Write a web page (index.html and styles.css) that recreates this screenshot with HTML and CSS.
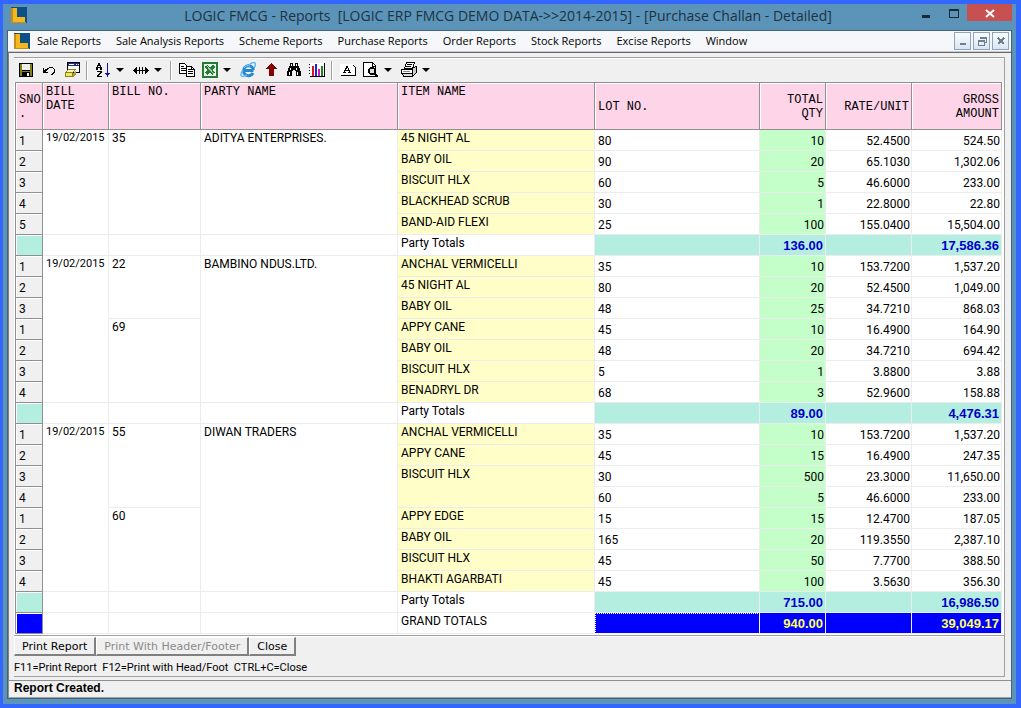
FILE: index.html
```html
<!DOCTYPE html>
<html lang="en">
<head>
    <meta charset="UTF-8">
    <meta name="viewport" content="width=device-width, initial-scale=1.0">
    <title>LOGIC FMCG - Reports</title>
    <link rel="stylesheet" href="styles.css">
</head>
<body>
    <div class="window">
        <header class="title-bar">
            <svg class="logo" viewBox="0 0 16 16"><rect width="16" height="16" fill="#0d5086"/><path d="M1 1h5v9h8v5H1z" fill="#f5b81c"/><path d="M1 1h1v14h13v1H0V1z" fill="#c98c14"/></svg>
            <h1>LOGIC FMCG - Reports&nbsp; [LOGIC ERP FMCG DEMO DATA-&gt;&gt;2014-2015] - [Purchase Challan - Detailed]</h1>
            <div class="window-buttons">
                <button class="win-btn" aria-label="Minimize"><svg viewBox="0 0 12 12"><path d="M1 8h8v3H1z" fill="#1b2b36"/></svg></button>
                <button class="win-btn" aria-label="Maximize"><svg viewBox="0 0 12 12"><path d="M1 2h10v9H1zM2 4v6h8V4z" fill="#1b2b36" fill-rule="evenodd"/></svg></button>
                <button class="win-btn win-close" aria-label="Close window"><svg viewBox="0 0 12 12"><path d="M2 3l8 7M10 3l-8 7" stroke="#fff" stroke-width="2"/></svg></button>
            </div>
        </header>

        <div class="client">
            <nav class="menu-bar">
                <svg class="logo" viewBox="0 0 16 16"><rect width="16" height="16" fill="#0d5086"/><path d="M1 1h5v9h8v5H1z" fill="#f5b81c"/><path d="M1 1h1v14h13v1H0V1z" fill="#c98c14"/></svg>
                <a href="#">Sale Reports</a>
                <a href="#">Sale Analysis Reports</a>
                <a href="#">Scheme Reports</a>
                <a href="#">Purchase Reports</a>
                <a href="#">Order Reports</a>
                <a href="#">Stock Reports</a>
                <a href="#">Excise Reports</a>
                <a href="#">Window</a>
                <div class="mdi-buttons">
                    <button aria-label="Minimize report"><svg viewBox="0 0 10 10"><path d="M2 7h6v2H2z" fill="#6d7f92"/></svg></button>
                    <button aria-label="Restore report"><svg viewBox="0 0 10 10"><path d="M3 3V1h6v5H7M1 4h6v5H1zM1 5h6M3 2h6" stroke="#6d7f92" fill="none"/></svg></button>
                    <button aria-label="Close report"><svg viewBox="0 0 10 10"><path d="M2 2l6 6M8 2L2 8" stroke="#6d7f92" stroke-width="2"/></svg></button>
                </div>
            </nav>

            <main class="report">
                <div class="panel">
                    <div class="toolbar">
                        <button class="tool" aria-label="Save"><svg viewBox="0 0 16 16"><path d="M1 1h14v14H1z"/><path d="M2 2h2v12H2zM12 2h2v12h-2zM2 9h12v1H2z" fill="#808020"/><path d="M4 2h8v6H4z" fill="#eee"/><path d="M9 11h2v3H9z" fill="#eee"/></svg></button>
                        <button class="tool" aria-label="Undo"><svg viewBox="0 0 16 16"><path d="M2 6h1v2h1V7h2V6h2V5h4v1h1v1h1v4h-1v1h-1v1h-2v-1h1v-1h1v-1h1V7h-1V6H8v1H7v1H6v1H5v1h2v1H2z"/></svg></button>
                        <button class="tool" aria-label="Clear"><svg viewBox="0 0 16 16"><path d="M3 0h13v11H3z" fill="#000"/><path d="M4 1h11v3H4z" fill="#22298f"/><path d="M4 4h11v6H4z" fill="#f8f8f8"/><path d="M5 2h5v1H5zM12 2h1v1h-1zM14 2h1v1h-1z" fill="#fff"/><path d="M4.500 7.500h7l-3 3h-7z" fill="#fffbc0" stroke="#8a8220"/><path d="M1.500 10.500h7v4h-7z" fill="#f2e860" stroke="#8a8220"/><path d="M9 11l3-3v4l-3 3z" fill="#aaa02c"/></svg></button>
                        <span class="sep"></span>
                        <button class="tool" aria-label="Sort"><svg viewBox="0 0 16 16"><path d="M3 1h2v2h1v2h1v3H5V6H3v2H1V5h1V3h1zM3 4v1h2V4zM2 9h5v2H6v1H5v1H4v1h3v1H2v-2h1v-1h1v-1h1v-1H2z"/><path d="M12 1h1v10h2v1h-1v1h-1v2h-1v-2h-1v-1h-1v-1h2z" fill="#10109a"/></svg></button>
                        <button class="caret" aria-label="Sort options"></button>
                        <button class="tool" aria-label="Fit column width"><svg viewBox="0 0 16 16"><path d="M0 8h1V7h1V6h1V5h1v3h2V5h1v3h2V5h1v3h2V5h1v1h1v1h1v1h1v1h-1v1h-1v1h-1v1h-1V9h-2v3H9V9H7v3H6V9H4v3H3v-1H2v-1H1V9H0z"/></svg></button>
                        <button class="caret" aria-label="Width options"></button>
                        <span class="sep"></span>
                        <button class="tool" aria-label="Copy"><svg viewBox="0 0 16 16"><path d="M.5 1.500h5l2 2v8h-7zM7.500 4.500h5l3 3v7h-8z" fill="#fff" stroke="#000"/><path d="M2 4h3v1H2zM2 6h5v1H2zM2 8h5v1H2zM9 7h3v1H9zM9 9h5v1H9zM9 11h5v1H9zM12 5h1v2h2v1h-3z"/></svg></button>
                        <button class="tool" aria-label="Export to Excel"><svg viewBox="0 0 16 16"><path d="M1 1h14v14H1z" fill="#e8f4e8" stroke="#267a36" stroke-width="2"/><path d="M4 4l8 8M12 4l-8 8" stroke="#267a36" stroke-width="3"/><path d="M4 3l8 9" stroke="#a9d5ac"/></svg></button>
                        <button class="caret" aria-label="Export options"></button>
                        <button class="tool" aria-label="Internet"><svg class="smooth" viewBox="0 0 16 16"><path d="M13.500 8.500H4M13 11a5 5 0 1 1 .5-3" fill="none" stroke="#2487cf" stroke-width="3"/><path d="M10 2c5-3 7-1 4 4M3 8c-4 6-2 8 4 5" fill="none" stroke="#5cb7ec" stroke-width="1.500"/><path d="M4 6c1-2 4-3 6-2" fill="none" stroke="#8fd3f8"/></svg></button>
                        <button class="tool" aria-label="Move up"><svg viewBox="0 0 16 16"><path d="M8 1h1v1h1v1h1v1h1v1h1v1h1v1h-3v7H6V7H3V6h1V5h1V4h1V3h1V2h1z" fill="#850000"/></svg></button>
                        <button class="tool" aria-label="Find"><svg viewBox="0 0 16 16"><path d="M4 1h3v3h2V1h3v3h1v2h1v3h1v5h-5V9H9V8H7v1H6v5H1V9h1V6h1V4h1z"/><path d="M5 2h1v2H5zM10 2h1v2h-1zM4 6h1v2H4zM10 6h1v2h-1zM3 10h1v3H3zM11 10h1v3h-1z" fill="#fff"/></svg></button>
                        <button class="tool" aria-label="Chart"><svg viewBox="0 0 16 16"><path d="M1 1h14v13H1z" fill="#fff"/><path d="M0 2h1v1H0zM0 5h1v1H0zM0 8h1v1H0zM0 11h1v1H0zM1 14h15v1H1zM15 1h1v14h-1z"/><path d="M3 4h2v10H3z" fill="#d01818"/><path d="M6 2h2v12H6z" fill="#2222d8"/><path d="M9 7h2v7H9z" fill="#c020c0"/><path d="M12 4h2v10h-2z" fill="#188818"/></svg></button>
                        <span class="sep"></span>
                        <button class="tool" aria-label="Font"><svg viewBox="0 0 16 16"><path d="M0 2h13l3 3v8H0z" fill="#fff"/><path d="M1 13h15v1H1zM15 5h1v9h-1zM13 3h1v1h-1zM14 4h1v1h-1zM6 4h2v2h1v2h1v2h1v1H8v-1h1V9H5v1h1v1H3v-1h1V8h1V6h1zM6 7v1h2V6H7v1z"/></svg></button>
                        <button class="tool" aria-label="Print preview"><svg viewBox="0 0 16 16"><path d="M.5.5h9l3 3v11H.5z" fill="#fff" stroke="#000"/><path d="M9 1h1v3h3v1H9z"/><circle cx="9" cy="9" r="3" fill="#ddd" stroke="#000" stroke-width="1.500"/><path d="M11 11l4 4" stroke="#000" stroke-width="2"/></svg></button>
                        <button class="caret" aria-label="Preview options"></button>
                        <button class="tool" aria-label="Print"><svg viewBox="0 0 16 16"><path d="M5.500.5h8l-2 6h-8z" fill="#fff" stroke="#000"/><path d="M6 2h5v1H6zM5 4h5v1H5z"/><path d="M11.500 6.500l3-2h1v6l-4 4z" fill="#ccc" stroke="#000"/><path d="M.5 7.500h11v4H.5z" fill="#fff" stroke="#000"/><path d="M2 9h7v1H2z" fill="#888"/><path d="M1.500 11.500h10v3h-9z" stroke="#000" fill="#ddd"/></svg></button>
                        <button class="caret" aria-label="Print options"></button>
                    </div>

                    <div class="grid-wrap">
                        <table class="grid">
                            <colgroup>
                                <col class="c-sno"><col class="c-date"><col class="c-bill"><col><col><col class="c-lot"><col class="c-qty"><col class="c-rate"><col class="c-amount">
                            </colgroup>
                            <thead>
                                <tr>
                                    <th>SNO<br>.</th>
                                    <th class="top">BILL<br>DATE</th>
                                    <th class="top">BILL NO.</th>
                                    <th class="top">PARTY NAME</th>
                                    <th class="top">ITEM NAME</th>
                                    <th>LOT NO.</th>
                                    <th class="num">TOTAL<br>QTY</th>
                                    <th class="num">RATE/UNIT</th>
                                    <th class="num">GROSS<br>AMOUNT</th>
                                </tr>
                            </thead>
                            <tbody>
                                <tr><td class="sno">1</td><td class="top date" rowspan="5">19/02/2015</td><td class="top" rowspan="5">35</td><td class="top" rowspan="5">ADITYA ENTERPRISES.</td><td class="item">45 NIGHT AL</td><td>80</td><td class="qty">10</td><td class="num">52.4500</td><td class="num">524.50</td></tr>
                                <tr><td class="sno">2</td><td class="item">BABY OIL</td><td>90</td><td class="qty">20</td><td class="num">65.1030</td><td class="num">1,302.06</td></tr>
                                <tr><td class="sno">3</td><td class="item">BISCUIT HLX</td><td>60</td><td class="qty">5</td><td class="num">46.6000</td><td class="num">233.00</td></tr>
                                <tr><td class="sno">4</td><td class="item">BLACKHEAD SCRUB</td><td>30</td><td class="qty">1</td><td class="num">22.8000</td><td class="num">22.80</td></tr>
                                <tr><td class="sno">5</td><td class="item">BAND-AID FLEXI</td><td>25</td><td class="qty">100</td><td class="num">155.0400</td><td class="num">15,504.00</td></tr>
                                <tr class="total"><td class="sno"></td><td></td><td></td><td></td><td class="top">Party Totals</td><td class="sum"></td><td class="sum">136.00</td><td class="sum"></td><td class="sum">17,586.36</td></tr>
                            </tbody>
                            <tbody>
                                <tr><td class="sno">1</td><td class="top date" rowspan="7">19/02/2015</td><td class="top" rowspan="3">22</td><td class="top" rowspan="7">BAMBINO NDUS.LTD.</td><td class="item">ANCHAL VERMICELLI</td><td>35</td><td class="qty">10</td><td class="num">153.7200</td><td class="num">1,537.20</td></tr>
                                <tr><td class="sno">2</td><td class="item">45 NIGHT AL</td><td>80</td><td class="qty">20</td><td class="num">52.4500</td><td class="num">1,049.00</td></tr>
                                <tr><td class="sno">3</td><td class="item">BABY OIL</td><td>48</td><td class="qty">25</td><td class="num">34.7210</td><td class="num">868.03</td></tr>
                                <tr><td class="sno">1</td><td class="top" rowspan="4">69</td><td class="item">APPY CANE</td><td>45</td><td class="qty">10</td><td class="num">16.4900</td><td class="num">164.90</td></tr>
                                <tr><td class="sno">2</td><td class="item">BABY OIL</td><td>48</td><td class="qty">20</td><td class="num">34.7210</td><td class="num">694.42</td></tr>
                                <tr><td class="sno">3</td><td class="item">BISCUIT HLX</td><td>5</td><td class="qty">1</td><td class="num">3.8800</td><td class="num">3.88</td></tr>
                                <tr><td class="sno">4</td><td class="item">BENADRYL DR</td><td>68</td><td class="qty">3</td><td class="num">52.9600</td><td class="num">158.88</td></tr>
                                <tr class="total"><td class="sno"></td><td></td><td></td><td></td><td class="top">Party Totals</td><td class="sum"></td><td class="sum">89.00</td><td class="sum"></td><td class="sum">4,476.31</td></tr>
                            </tbody>
                            <tbody>
                                <tr><td class="sno">1</td><td class="top date" rowspan="8">19/02/2015</td><td class="top" rowspan="4">55</td><td class="top" rowspan="8">DIWAN TRADERS</td><td class="item">ANCHAL VERMICELLI</td><td>35</td><td class="qty">10</td><td class="num">153.7200</td><td class="num">1,537.20</td></tr>
                                <tr><td class="sno">2</td><td class="item">APPY CANE</td><td>45</td><td class="qty">15</td><td class="num">16.4900</td><td class="num">247.35</td></tr>
                                <tr><td class="sno">3</td><td class="item" rowspan="2">BISCUIT HLX</td><td>30</td><td class="qty">500</td><td class="num">23.3000</td><td class="num">11,650.00</td></tr>
                                <tr><td class="sno">4</td><td>60</td><td class="qty">5</td><td class="num">46.6000</td><td class="num">233.00</td></tr>
                                <tr><td class="sno">1</td><td class="top" rowspan="4">60</td><td class="item">APPY EDGE</td><td>15</td><td class="qty">15</td><td class="num">12.4700</td><td class="num">187.05</td></tr>
                                <tr><td class="sno">2</td><td class="item">BABY OIL</td><td>165</td><td class="qty">20</td><td class="num">119.3550</td><td class="num">2,387.10</td></tr>
                                <tr><td class="sno">3</td><td class="item">BISCUIT HLX</td><td>45</td><td class="qty">50</td><td class="num">7.7700</td><td class="num">388.50</td></tr>
                                <tr><td class="sno">4</td><td class="item">BHAKTI AGARBATI</td><td>45</td><td class="qty">100</td><td class="num">3.5630</td><td class="num">356.30</td></tr>
                                <tr class="total"><td class="sno"></td><td></td><td></td><td></td><td class="top">Party Totals</td><td class="sum"></td><td class="sum">715.00</td><td class="sum"></td><td class="sum">16,986.50</td></tr>
                            </tbody>
                            <tfoot>
                                <tr class="grand"><td class="sno"></td><td></td><td></td><td></td><td class="top">GRAND TOTALS</td><td class="sum focused"></td><td class="sum">940.00</td><td class="sum"></td><td class="sum">39,049.17</td></tr>
                            </tfoot>
                        </table>
                    </div>

                    <div class="actions">
                        <button>Print Report</button>
                        <button disabled>Print With Header/Footer</button>
                        <button>Close</button>
                    </div>
                    <p class="hint">F11=Print Report&nbsp; F12=Print with Head/Foot&nbsp; CTRL+C=Close</p>
                </div>
            </main>

            <footer class="status">Report Created.</footer>
        </div>
    </div>
</body>
</html>
```
FILE: styles.css
```css
* {
    box-sizing: border-box;
}

body {
    margin: 0;
    background: #3366ff;
    font-family: Roboto, "Liberation Sans", sans-serif;
    font-size: 12px;
    color: #000;
}

button {
    margin: 0;
    padding: 0;
    border: none;
    background: none;
    font: inherit;
}

svg {
    display: block;
    shape-rendering: crispEdges;
}

svg.smooth {
    shape-rendering: auto;
}

.window {
    min-height: 100vh;
    display: flex;
    flex-direction: column;
    padding: 0 4px 5px;
    border: 4px solid #3366ff;
    border-width: 4px 5px 4px 3px;
    background: #5b93b9;
}

.logo {
    width: 16px;
    height: 16px;
    flex: none;
}

/* Title bar */
.title-bar {
    display: flex;
    align-items: flex-start;
    height: 26px;
    padding: 3px 0 0 4px;
}

.title-bar h1 {
    flex: 1;
    margin: 0;
    padding-left: 76px;
    text-align: center;
    font: 14px/18px "Open Sans", "Noto Sans", sans-serif;
    color: #1d323f;
    white-space: nowrap;
}

.window-buttons {
    display: flex;
    margin-top: -3px;
}

.win-btn {
    width: 27px;
    height: 17px;
    display: flex;
    align-items: center;
    justify-content: center;
}

.win-btn svg {
    width: 12px;
    height: 12px;
}

.win-close {
    width: 45px;
    background: #c75050;
}

.win-close svg {
    shape-rendering: auto;
}

/* Client area */
.client {
    flex: 1;
    display: flex;
    flex-direction: column;
    border: 1px solid #41637c;
    background: #f0f0f0;
}

.menu-bar {
    display: flex;
    align-items: center;
    gap: 15px;
    height: 21px;
    padding: 0 2px 0 6px;
    background: #f5f7fa;
    border-bottom: 1px solid #c8ccd0;
}

.menu-bar .logo {
    margin-right: -8px;
}

.menu-bar a {
    font: 11px/18px "Open Sans", "Noto Sans", sans-serif;
    color: #000;
    text-decoration: none;
    white-space: nowrap;
}

.mdi-buttons {
    display: flex;
    gap: 2px;
    margin-left: auto;
}

.mdi-buttons button {
    width: 17px;
    height: 18px;
    display: flex;
    align-items: center;
    justify-content: center;
    border: 1px solid #8fa4ba;
    background: linear-gradient(#fafcfe, #d9e5f2);
}

.mdi-buttons svg {
    width: 10px;
    height: 10px;
}

.report {
    flex: 1;
    padding: 4px 6px 3px 5px;
    border-top: 1px solid #696969;
    border-left: 1px solid #808080;
}

.panel {
    border-top: 1px solid #a0a0a0;
    border-right: 1px solid #a0a0a0;
    border-bottom: 1px solid #a0a0a0;
}

.toolbar {
    display: flex;
    align-items: center;
    height: 24px;
    padding-bottom: 1px;
    border-top: 1px solid #fff;
}

.tool {
    width: 23px;
    height: 22px;
    display: flex;
    align-items: center;
    justify-content: center;
}

.tool svg {
    width: 16px;
    height: 16px;
}

.caret {
    width: 15px;
    height: 22px;
    display: flex;
    align-items: center;
}

.caret::before {
    content: "";
    margin-left: 2px;
    border: 4px solid transparent;
    border-top-color: #000;
    border-bottom: none;
}

.sep {
    width: 8px;
    height: 19px;
    background: linear-gradient(90deg, #a0a0a0 50%, #fff 50%) center / 2px 100% no-repeat;
}

/* Report grid */
.grid-wrap {
    padding: 0 2px 1px 1px;
    background: #fff;
    border-bottom: 1px solid #a0a0a0;
}

.grid {
    width: 100%;
    table-layout: fixed;
    border-collapse: separate;
    border-spacing: 0;
    border-top: 1px solid #909090;
    border-left: 1px solid #909090;
}

.c-sno { width: 27px; }
.c-date { width: 66px; }
.c-bill { width: 92px; }
.c-lot { width: 165px; }
.c-qty { width: 66px; }
.c-rate { width: 86px; }
.c-amount { width: 90px; }

.grid th {
    height: 47px;
    padding: 2px 2px 0 3px;
    border-right: 1px solid #909090;
    border-bottom: 1px solid #909090;
    background: #fed4e8;
    box-shadow: inset 1px 1px #fff;
    font: 12px/14px "Liberation Mono", monospace;
    text-align: left;
}

.grid td {
    height: 21px;
    padding: 2px 1px 0 3px;
    border-right: 1px solid #ececec;
    border-bottom: 1px solid #ececec;
    line-height: 14px;
    white-space: nowrap;
}

.grid th.top {
    vertical-align: top;
}

.grid td.top,
.grid td.item {
    padding-top: 1px;
    vertical-align: top;
}

.grid .date {
    font-size: 11px;
}

.grid .item {
    background: #fffec8;
}

.grid .num,
.grid .qty {
    text-align: right;
}

.grid .qty {
    background: #c4fec8;
}

.grid .sno {
    background: #f0f0f0;
    border-color: #909090;
    box-shadow: inset 1px 1px #fff;
}

.grid .sum {
    padding-right: 2px;
    font: bold 13px/14px "Liberation Sans", Arial, sans-serif;
    text-align: right;
}

.total .sno,
.total .sum {
    background: #b4eee0;
    color: #0000c8;
}

.grand .sno,
.grand .sum {
    background: #0000fe;
    color: #ffff60;
}

.grand .focused {
    outline: 1px dotted #fff;
    outline-offset: -1px;
}

/* Buttons under the grid */
.actions {
    display: flex;
    height: 20px;
    border-top: 1px solid #fff;
}

.actions button {
    padding: 0 7px;
    border: 1px solid #fff;
    border-right: 2px solid #808080;
    border-bottom: 2px solid #808080;
    font: 11px/15px "DejaVu Sans", Verdana, sans-serif;
    color: #000;
}

.actions button:disabled {
    color: #8a8a8a;
}

.hint {
    margin: 0;
    padding: 5px 0 1px;
    font-size: 11px;
    line-height: 14px;
}

.status {
    height: 18px;
    padding-left: 5px;
    border-top: 1px solid #909090;
    border-left: 1px solid #909090;
    border-bottom: 1px solid #a0a0a0;
    font: bold 12px/15px "Liberation Sans", Arial, sans-serif;
}
```
